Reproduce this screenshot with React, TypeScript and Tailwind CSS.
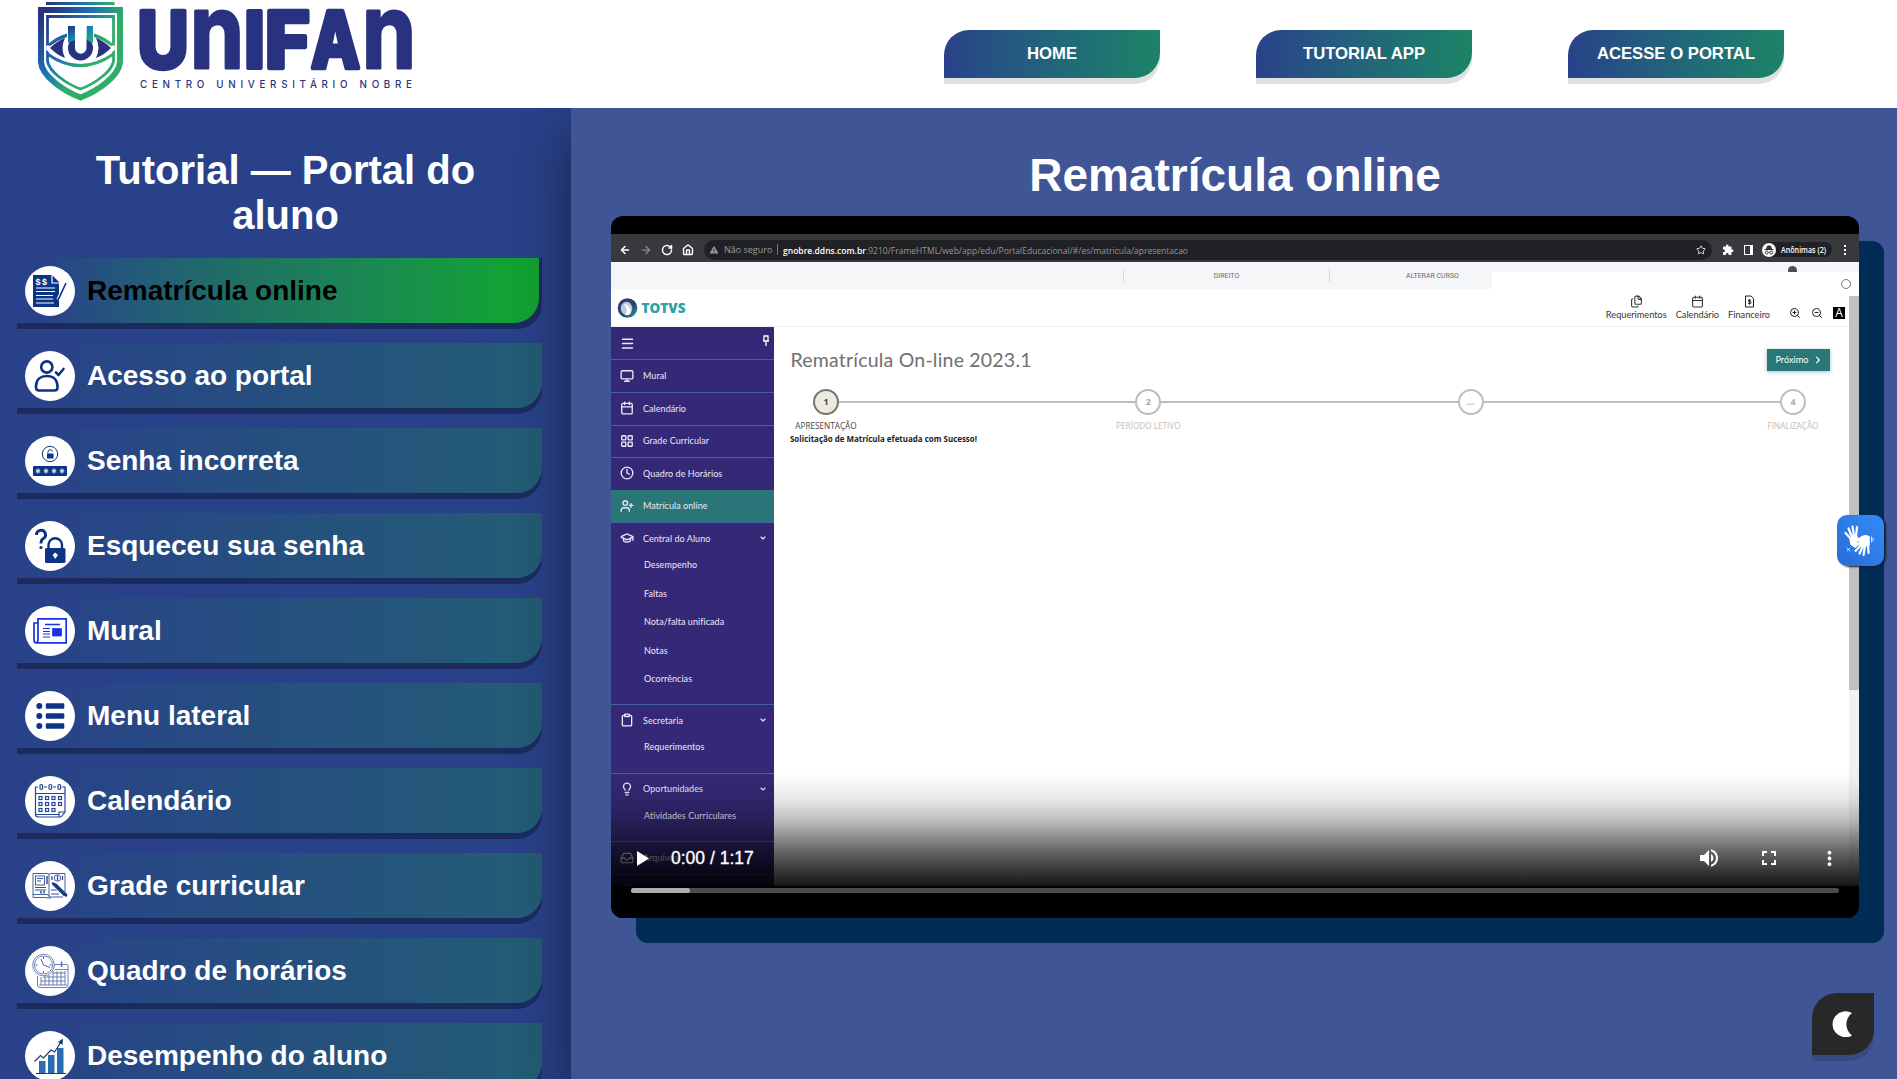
import React from "react";
import {
  ArrowLeft, ArrowRight, Calendar, ChevronDown, Clock, ClipboardList, Clipboard, Files, GraduationCap,
  Inbox, LayoutGrid, Lightbulb, Menu, Monitor, RotateCw, Home, Star, UserPlus, ZoomIn, ZoomOut,
} from "lucide-react";
import { FaChevronRight, FaExclamationTriangle } from "react-icons/fa";
import { MdVolumeUp, MdFullscreen, MdMoreVert, MdExtension } from "react-icons/md";

const NAVY = "#0b3484";

function Logo() {
  return (
    <svg width="440" height="108" viewBox="0 0 440 108" className="shrink-0" role="img" aria-label="UNIFAN Centro Universitário Nobre">
      <defs>
        <linearGradient id="shield" gradientUnits="userSpaceOnUse" x1="42" y1="18" x2="112" y2="70">
          <stop offset="0" stopColor="#29327f" />
          <stop offset="0.4" stopColor="#1a70b4" />
          <stop offset="0.72" stopColor="#2fae69" />
          <stop offset="1" stopColor="#2fae69" />
        </linearGradient>
        <linearGradient id="arms" x1="0" y1="0" x2="1" y2="1">
          <stop offset="0" stopColor="#29327f" />
          <stop offset="0.5" stopColor="#1787b5" />
          <stop offset="1" stopColor="#2fae69" />
        </linearGradient>
        <linearGradient id="bar" x1="0" y1="0" x2="1" y2="0">
          <stop offset="0" stopColor="#29327f" />
          <stop offset="0.5" stopColor="#1a70b4" />
          <stop offset="1" stopColor="#2fae69" />
        </linearGradient>
      </defs>
      <rect x="46" y="2" width="68.500" height="3" fill="url(#bar)" />
      <path d="M41 10H120V62C119 76 98 91 80.500 97.500C63 91 42 76 41 62Z" fill="none" stroke="url(#shield)" strokeWidth="6" />
      <path d="M47.500 16.500H113.500V61C112 72 94 84 80.500 89C67 84 49 72 47.500 61Z" fill="none" stroke="url(#shield)" strokeWidth="2.800" />
      <path d="M44 48Q80 16 117 48Q80 80 44 48" fill="white" />
      <path d="M47 45Q57 36 67 33.500V37Q58 40 50 46ZM94 33.500Q104 36 114 45L111 46Q103 40 94 37Z" fill="url(#shield)" />
      <path d="M47 52Q80 76 114 52V55.500Q80 79 47 55.500Z" fill="url(#shield)" />
      <path d="M50 48Q57 41 65 38Q60 48 65 58Q57 55 50 48ZM111 48Q104 41 96 38Q101 48 96 58Q104 55 111 48Z" fill="#29327f" />
      <circle cx="80.500" cy="48" r="12.500" fill="#29327f" />
      <path d="M68 26H75V40L68 43ZM86.500 26H93V43L86.500 40Z" fill="url(#arms)" />
      <path d="M75 26H86.500V48A5.700 5.700 0 0 1 75 48Z" fill="white" />
      <text y="68" fill="#29327f" stroke="#29327f" strokeLinejoin="round" fontFamily="Inter" fontWeight="800" fontSize="78">
        <tspan x="137.500" textLength="51" lengthAdjust="spacingAndGlyphs" strokeWidth="4.500">U</tspan>
        <tspan x="190" fontSize="104" fontWeight="700" strokeWidth="3" textLength="54" lengthAdjust="spacingAndGlyphs" style={{ textTransform: "lowercase" }}>N</tspan>
        <tspan x="244" textLength="21" lengthAdjust="spacingAndGlyphs" strokeWidth="4">I</tspan>
        <tspan x="265" textLength="45" lengthAdjust="spacingAndGlyphs" strokeWidth="4.500">F</tspan>
        <tspan x="311" textLength="49" lengthAdjust="spacingAndGlyphs" strokeWidth="4.500">A</tspan>
        <tspan x="362" fontSize="104" fontWeight="700" strokeWidth="3" textLength="54" lengthAdjust="spacingAndGlyphs" style={{ textTransform: "lowercase" }}>N</tspan>
      </text>
      <text x="140" y="87.800" textLength="272" fill="#29327f" fontFamily="Inter" fontWeight="500" fontSize="9.800">CENTRO UNIVERSITÁRIO NOBRE</text>
    </svg>
  );
}

const icons: Record<string, React.ReactNode> = {
  enroll: (
    <>
      <path d="M8 9H27L34 16V41H8Z" fill={NAVY} />
      <path d="M27 9V17H34" fill="none" stroke="white" strokeWidth="1.200" />
      <path d="M11 22H30M11 25.500H30M11 29.500H28M11 33H28M11 37H29" stroke="white" strokeWidth="1.200" />
      <text x="10.500" y="18.500" fontSize="9" fontWeight="700" fontFamily="Liberation Sans" letterSpacing="1.500" fill="white">$$</text>
      <path d="M40 18L33 34" stroke="white" strokeWidth="3.400" />
      <path d="M41 17L34 32L32 35" stroke={NAVY} strokeWidth="1.600" fill="none" />
    </>
  ),
  person: (
    <g fill="none" stroke={NAVY} strokeWidth="2.600" strokeLinecap="round" strokeLinejoin="round">
      <circle cx="21.800" cy="16" r="5.600" />
      <path d="M11 35.500C11 28 16 25 21.800 25S32.500 28 32.500 35.500V36.500Q32.500 39.500 29.500 39.500H14Q11 39.500 11 36.500Z" />
      <path d="M31 21.500L33.500 24L38.500 18" />
    </g>
  ),
  wrong: (
    <>
      <circle cx="25" cy="18" r="7.700" fill="none" stroke={NAVY} strokeWidth="1" />
      <rect x="22" y="17.500" width="6.500" height="5" fill={NAVY} />
      <path d="M23 17V15.500A2.300 2.300 0 0 1 27.500 15.500" fill="none" stroke={NAVY} strokeWidth="1" />
      <rect x="8" y="30" width="34" height="10" rx="1" fill={NAVY} />
      <path
        d="M13 32.500V37.500M10.800 33.700L15.200 36.300M15.200 33.700L10.800 36.300M21 32.500V37.500M18.800 33.700L23.200 36.300M23.200 33.700L18.800 36.300M29 32.500V37.500M26.800 33.700L31.200 36.300M31.200 33.700L26.800 36.300M37 32.500V37.500M34.800 33.700L39.200 36.300M39.200 33.700L34.800 36.300"
        stroke="#cfd9ee"
        strokeWidth="1.200"
      />
    </>
  ),
  forgot: (
    <>
      <path d="M11.500 14A4.500 4.500 0 1 1 18 17.800Q16 19 16 22.500" fill="none" stroke={NAVY} strokeWidth="2.900" />
      <circle cx="16" cy="26.500" r="1.600" fill={NAVY} />
      <rect x="20" y="27" width="20.500" height="15" rx="1.500" fill={NAVY} />
      <path d="M23.500 28V24A6.700 6.700 0 0 1 37 24V28" fill="none" stroke={NAVY} strokeWidth="2.400" />
      <path d="M30.200 31.500L33 34L30.200 38L27.600 34Z" fill="white" />
    </>
  ),
  news: (
    <g fill="none" stroke="#1732e6" strokeWidth="1.700">
      <path d="M13 12.800H41.200V36.800H11Q13 36.500 13 34Z" />
      <path d="M13 17H9V34Q9 36.800 11.500 36.800" />
      <path d="M20 18.500H35" />
      <path d="M18 22.500H25M18 25.500H25M18 28H25M18 31H25" strokeWidth="1" />
      <rect x="28" y="23" width="8" height="6.500" fill="#1732e6" />
    </g>
  ),
  list: (
    <g fill={NAVY}>
      {[15, 25, 35].map((y) => (
        <g key={y}>
          <circle cx="14.300" cy={y} r="3" />
          <rect x="20.800" y={y - 2.800} width="18.500" height="5.600" rx="1.300" />
        </g>
      ))}
    </g>
  ),
  calendar: (
    <g fill="none" stroke="#234490" strokeWidth="1.200">
      <path d="M13 11H10.500V38Q10.500 41 13 41H36L40 36V11H37M19 11H22M28 11H31M10.500 17.500H40M10.500 38.500H34M34 41V36H40" />
      {[15.500, 24.500, 33.500].map((x) => <rect key={x} x={x - 0.500} y="8.500" width="2.600" height="5" rx="1.200" />)}
      {[21, 27, 33].map((y) => [14, 20.500, 27, 33.500].map((x) => (x === 33.500 && y === 33 ? null : <rect key={x + "-" + y} x={x} y={y - 0.500} width="3" height="3" />)))}
    </g>
  ),
  book: (
    <g fill="none" stroke="#314f96" strokeWidth="0.900">
      <path d="M8 12.500H22Q24 12.500 24 14Q24 12.500 26 12.500H40V34M24 14V35M8 12.500V36.500H22M8 33.500H22Q24 33.500 24 36H38M26 37H22" />
      <rect x="10.500" y="15" width="9" height="9" />
      <path d="M12 17.500H18M12 20H16M10 26.500H21M10 29H21M26 29H34M26 33H34" strokeWidth="1.100" />
      <circle cx="32.500" cy="17" r="3.200" />
      <path d="M32.500 14.500V19.500M27 15V19M37.500 15V19" strokeWidth="1.300" />
      <path d="M27 22L40 34" stroke="white" strokeWidth="4" />
      <path d="M27 22L31 23.500L42 34.500M28 23L39 34L42 35" stroke="#173c88" strokeWidth="2" />
      <path d="M16 30V32.500M19 30V32.500M22 15V23" strokeWidth="1.500" />
    </g>
  ),
  schedule: (
    <g fill="none" stroke="#5a75b0" strokeWidth="0.900">
      <path d="M29 18.500H41.500Q43 18.500 43 20V39Q43 41.500 41 41.500H15Q12.500 41.500 12.500 39V30M30 23.500H43M14 39H42" />
      <path d="M28 27H40M18 31H40M16 35H40M20 31V39M24 29V39M28 25V39M32 25V39M36 25V39M16 31V39M40 25V39" />
      <path d="M36.500 15.500V21" strokeWidth="1.600" />
      <circle cx="18.500" cy="19" r="10.800" fill="white" />
      <circle cx="18.500" cy="19" r="9" />
      <path d="M16 13L18.500 19L25 21.500M18.500 11V13M18.500 25V27M10.500 19H12.500M24.500 19H26.500" stroke="#35549a" />
    </g>
  ),
  chart: (
    <>
      <g fill="#2a6db5">
        <rect x="14" y="30" width="6.500" height="12" />
        <rect x="23" y="24" width="6.500" height="18" />
        <rect x="32" y="17" width="6.500" height="25" />
      </g>
      <path d="M11 42.500H41" stroke="#153a80" strokeWidth="1" />
      <path d="M9.500 30.500L15.500 24.500L18.500 27L26 19L29.500 21L37 9.500" fill="none" stroke="#153a80" strokeWidth="1.200" />
      <path d="M38 7.500L33 11L37.500 14Z" fill="#153a80" />
    </>
  ),
};

const lessons = [
  { icon: "enroll", label: "Rematrícula online", active: true },
  { icon: "person", label: "Acesso ao portal" },
  { icon: "wrong", label: "Senha incorreta" },
  { icon: "forgot", label: "Esqueceu sua senha" },
  { icon: "news", label: "Mural" },
  { icon: "list", label: "Menu lateral" },
  { icon: "calendar", label: "Calendário" },
  { icon: "book", label: "Grade curricular" },
  { icon: "schedule", label: "Quadro de horários" },
  { icon: "chart", label: "Desempenho do aluno" },
];

function LessonItem({ icon, label, active }: { icon: string; label: string; active?: boolean }) {
  return (
    <li
      className={
        "flex h-[65px] w-[525px] shrink-0 items-center rounded-br-[25px] shadow-[0_6px_0_#1c2b5e] " +
        (active
          ? "bg-[linear-gradient(to_right,#294189_50%,#1c2b5e_50%)] pr-[3px] text-black"
          : "rounded-tl-[25px] bg-linear-to-r from-[#294189] to-[#235c74] text-white")
      }
    >
      <div
        className={
          "flex h-full w-full items-center gap-3 rounded-tl-[25px] rounded-br-[25px] pl-2 " +
          (active ? "bg-linear-to-r from-[#294189] from-5% via-[#1f7361] via-45% to-[#12a233] to-94%" : "")
        }
      >
        <span className="size-[50px] shrink-0 overflow-hidden rounded-full bg-white">
          <svg width="50" height="50" viewBox="0 0 50 50">{icons[icon]}</svg>
        </span>
        <span className="text-[28px] leading-8 font-bold">{label}</span>
      </div>
    </li>
  );
}

function Sidebar() {
  return (
    <aside className="flex w-[571px] shrink-0 flex-col bg-[#294189]">
      <h2 className="mt-[40px] px-10 text-center text-[40px] leading-[45px] font-bold text-white">Tutorial — Portal do aluno</h2>
      <ul className="mt-[20px] ml-[17px] flex flex-col gap-5">
        {lessons.map((l) => <LessonItem key={l.label} {...l} />)}
      </ul>
    </aside>
  );
}

const ic = { size: 14, strokeWidth: 2.300 };

function PortalRow({ icon, label, open, active }: { icon: React.ReactNode; label: string; open?: boolean; active?: boolean }) {
  return (
    <div className={"flex h-[32.500px] items-center pr-[7px] pl-[9px] " + (active ? "bg-[#2a7578]" : "")}>
      <span className="w-[23px] shrink-0">{icon}</span>
      <span className="flex-1">{label}</span>
      {open && <ChevronDown size={8} strokeWidth={3.500} />}
    </div>
  );
}

function PortalGroup({ icon, label, items, pad }: { icon: React.ReactNode; label: string; items: string[]; pad: string }) {
  return (
    <div className={"border-b border-[#41639f] " + pad}>
      <div className="-mt-px"><PortalRow icon={icon} label={label} open /></div>
      <div className="-mt-[4px] pl-[33px]">
        {items.map((t) => <div key={t} className="flex h-[28.500px] items-center">{t}</div>)}
      </div>
    </div>
  );
}

function PortalMenu() {
  const line = "border-b border-[#41639f]";
  return (
    <div className="h-full w-[163px] shrink-0 overflow-hidden bg-[#352876] font-['Lato'] text-[9px] tracking-[0.06px] text-[#ece9f6]">
      <div className={"flex h-[32.500px] items-center justify-between pt-px pr-[4px] pl-[9px] " + line}>
        <Menu size={15} strokeWidth={2.400} />
        <svg width="8" height="12" viewBox="0 0 8 12" className="-mt-1"><path d="M2 1H6V6H7H1H2ZM4 6V11" fill="none" stroke="white" strokeWidth="1.300" /></svg>
      </div>
      <div className={line}><PortalRow icon={<Monitor {...ic} />} label="Mural" /></div>
      <div className={"-mt-px " + line}><PortalRow icon={<Calendar {...ic} />} label="Calendário" /></div>
      <div className={"-mt-px " + line}><PortalRow icon={<LayoutGrid {...ic} />} label="Grade Curricular" /></div>
      <div className={"-mt-px " + line}><PortalRow icon={<Clock {...ic} />} label="Quadro de Horários" /></div>
      <div className={"-mt-px " + line}><PortalRow icon={<UserPlus {...ic} />} label="Matrícula online" active /></div>
      <PortalGroup icon={<GraduationCap {...ic} />} label="Central do Aluno" items={["Desempenho", "Faltas", "Nota/falta unificada", "Notas", "Ocorrências"]} pad="pb-[11px]" />
      <PortalGroup icon={<Clipboard {...ic} />} label="Secretaria" items={["Requerimentos"]} pad="pb-[11.500px]" />
      <PortalGroup icon={<Lightbulb {...ic} />} label="Oportunidades" items={["Atividades Curriculares"]} pad="pb-[11px]" />
      <div className={line}><PortalRow icon={<Inbox {...ic} />} label="Arquivos" /></div>
      <PortalRow icon={<ClipboardList {...ic} />} label="" />
    </div>
  );
}

function BrowserBar() {
  return (
    <div className="flex h-7 shrink-0 items-center bg-[#38393c] text-[9px] text-white">
      <div className="flex w-[93px] items-center gap-[9px] pt-1 pl-[8px]">
        <ArrowLeft size={12} strokeWidth={3} />
        <ArrowRight size={12} strokeWidth={2.500} className="text-[#8a8b8e]" />
        <RotateCw size={12} strokeWidth={3} />
        <Home size={12} strokeWidth={2.800} />
      </div>
      <div className="mt-[3px] flex h-5 w-[1008px] items-center rounded-full bg-[#202124] pr-[6px] pl-[6px] font-['Open_Sans'] text-[#9a9b9e]">
        <FaExclamationTriangle size={8} className="mr-[6px]" />
        <span className="w-[47px] whitespace-nowrap">Não seguro</span>
        <span className="mr-[5px] ml-[6px] h-[11px] w-px bg-[#77787a]" />
        <svg width="408" height="16" className="shrink-0" fontFamily="Open Sans" fontSize="9">
          <text x="0" y="11.500" textLength="405" lengthAdjust="spacingAndGlyphs" fill="#96979a">
            <tspan fill="white" fontWeight="600">gnobre.ddns.com.br</tspan>:9210/FrameHTML/web/app/edu/PortalEducacional/#/es/matricula/apresentacao
          </text>
        </svg>
        <Star size={10} className="ml-auto text-white" />
      </div>
      <div className="flex flex-1 items-center pt-[3px] pl-[10px]">
        <MdExtension size={12} />
        <span className="ml-[10px] h-[10px] w-[9px] border-[1.500px] border-r-[3px] border-white" />
        <span className="ml-[9px] flex h-[15px] w-[70px] items-center gap-1 rounded-full bg-[#202124] whitespace-nowrap">
          <svg width="14" height="14" viewBox="0 0 14 14" className="shrink-0">
            <circle cx="7" cy="7" r="7" fill="white" />
            <path d="M2.500 6.500H11.500M4.500 6L5.500 3H8.500L9.500 6Z" fill="#333" stroke="#333" />
            <circle cx="4.800" cy="9.500" r="1.500" fill="none" stroke="#333" /><circle cx="9.200" cy="9.500" r="1.500" fill="none" stroke="#333" />
          </svg>
          <svg width="48" height="12" fontFamily="Open Sans" fontSize="8.500"><text x="1" y="9" textLength="45" lengthAdjust="spacingAndGlyphs" fill="white" fontWeight="600">Anônimas (2)</text></svg>
        </span>
        <span className="ml-[12px] flex flex-col gap-[2px]">
          <i className="size-[2px] bg-white" /><i className="size-[2px] bg-white" /><i className="size-[2px] bg-white" />
        </span>
      </div>
    </div>
  );
}

function Step({ n, label, active }: { n: string; label: string; active?: boolean }) {
  return (
    <div className="flex w-[26px] shrink-0 flex-col items-center">
      <span className={"flex size-[26px] shrink-0 items-center justify-center rounded-full text-[9px] " + (active ? "border-2 border-[#77756f] bg-[#ece9e0] font-bold text-[#444]" : "border-2 border-[#bdbdbd] bg-white font-bold text-[#aaa]")}>{n}</span>
      <span className={"mt-[5.500px] text-[8.200px] leading-[12px] whitespace-nowrap " + (active ? "text-[#444]" : "text-[#bdbdbd]")}>{label}</span>
    </div>
  );
}

function PortalScreen() {
  return (
    <div className="flex h-[652px] flex-col overflow-hidden bg-white">
      <BrowserBar />
      <div className="flex h-[27px] shrink-0 items-start bg-white font-['Roboto'] text-[7px] text-[#6b6b6b]">
        <div className="flex h-[27px] w-[881px] items-center bg-[#f5f6f7]">
          <span className="ml-[512px] h-[13px] w-px bg-[#d5d7d9]" />
          <span className="w-[205px] pt-[2px] text-center">DIREITO</span>
          <span className="h-[13px] w-px bg-[#d5d7d9]" />
          <span className="flex-1 pt-[2px] pl-[43px] text-center">ALTERAR CURSO</span>
        </div>
        <div className="flex h-[10px] flex-1 items-end justify-end bg-[#f5f6f7] pr-[62px]">
          <span className="h-[6px] w-[9px] rounded-t-full bg-[#4b4f54]" />
        </div>
      </div>
      <div className="flex h-[38px] shrink-0 items-center border-b border-[#efefef] pl-[6px]">
        <svg width="72" height="24" viewBox="0 0 72 24">
          <defs><linearGradient id="orb" x1="0" y1="0" x2="1" y2="1"><stop offset="0" stopColor="#3a3a5c" /><stop offset="0.6" stopColor="#22486f" /><stop offset="1" stopColor="#2bb0b0" /></linearGradient></defs>
          <circle cx="10.500" cy="12" r="9.800" fill="url(#orb)" />
          <ellipse cx="9.500" cy="12.300" rx="5.800" ry="6.600" fill="#b8cde0" />
          <path d="M7 8Q13 8 14 17Q12 20 8 19Q12 14 7 8" fill="white" />
          <text x="24.500" y="17" fontFamily="Open Sans" fontWeight="800" fontSize="14.500" textLength="44" lengthAdjust="spacingAndGlyphs" fill="#2ba3a7">TOTVS</text>
        </svg>
        <div className="ml-auto flex items-start gap-[9px] pr-[19px] font-['Lato'] text-[9.200px] leading-[11px] text-[#333]">
          <span className="flex flex-col items-center gap-px"><Files size={13} />Requerimentos</span>
          <span className="flex flex-col items-center gap-px"><Calendar size={13} />Calendário</span>
          <span className="flex flex-col items-center gap-px">
            <svg width="13" height="13" viewBox="0 0 13 13" fill="none" stroke="#222">
              <path d="M2.500 1H8L10.500 3.500V12H2.500Z" />
              <path d="M8 5H5.500V6.700H7.800V8.500H5M6.600 4V9.700" strokeWidth="0.900" />
            </svg>
            Financeiro
          </span>
        </div>
        <div className="flex items-center gap-[10px] pt-[10px] pr-[14px] text-[#222]">
          <ZoomIn size={12} /><ZoomOut size={12} />
          <span className="flex size-[12px] items-center justify-center bg-black font-['Open_Sans'] text-[12px] leading-[12px] text-white">A</span>
        </div>
      </div>
      <div className="flex min-h-0 flex-1">
        <PortalMenu />
        <div className="flex flex-1 flex-col pl-[16px] font-['Open_Sans']">
          <div className="mt-[21.500px] flex h-[22px] items-center justify-between pr-[19px]">
            <svg width="250" height="24" fontFamily="Lato"><text x="0.500" y="18.500" fontSize="19.500" textLength="241" fill="#707070">Rematrícula On-line 2023.1</text></svg>
            <span className="flex h-[22px] w-[63px] items-center justify-center gap-[5px] bg-[#2a7778] font-['Lato'] text-[9.200px] text-white shadow-[0_1px_4px_rgba(42,119,120,.45)]">Próximo <FaChevronRight size={8} /></span>
          </div>
          <div className="mt-[18px] mr-[43px] ml-[23px] flex h-[43.500px] items-start">
            <Step n="1" label="APRESENTAÇÃO" active />
            <span className="mt-[12px] h-[2px] flex-1 bg-[#bdbdbd]" />
            <Step n="2" label="PERÍODO LETIVO" />
            <span className="mt-[12px] h-[2px] flex-1 bg-[#bdbdbd]" />
            <Step n="..." label="" />
            <span className="mt-[12px] h-[2px] flex-1 bg-[#bdbdbd]" />
            <Step n="4" label="FINALIZAÇÃO" />
          </div>
          <svg width="200" height="14"><text x="0" y="9.500" fontFamily="Open Sans" fontWeight="700" fontSize="8.500" textLength="187" lengthAdjust="spacingAndGlyphs" fill="#222">Solicitação de Matrícula efetuada com Sucesso!</text></svg>
        </div>
        <div className="-mt-[31px] w-[10px] shrink-0 bg-[#f1f1f1]"><div className="h-[394px] bg-[#c1c1c1]" /></div>
      </div>
    </div>
  );
}

function VideoPlayer() {
  return (
    <div className="relative h-[702px] w-[1248px] shrink-0 overflow-hidden rounded-xl bg-black pt-[18px]">
      <PortalScreen />
      <span className="absolute top-[63px] right-[8px] size-[10px] rounded-full border border-[#777]" />
      <div className="absolute inset-x-0 bottom-0 flex h-[152px] flex-col bg-[linear-gradient(to_bottom,rgba(0,0,0,0)_0px,rgba(0,0,0,.02)_15px,rgba(0,0,0,.10)_34px,rgba(0,0,0,.24)_53px,rgba(0,0,0,.43)_70px,rgba(0,0,0,.60)_85px,rgba(0,0,0,.78)_104px,rgba(0,0,0,.90)_119px,black_123px)] px-5 text-white">
        <div className="mt-[72px] flex h-10 items-center">
          <svg width="12" height="15" viewBox="0 0 12 15" className="ml-[6px]"><path d="M0 0L12 7.500L0 15Z" fill="white" /></svg>
          <span className="ml-[22px] text-[17.500px] [-webkit-text-stroke:0.3px_white]">0:00 / 1:17</span>
          <span className="mr-[-2px] ml-auto flex items-center"><MdVolumeUp size={24} className="mr-[36px]" /><MdFullscreen size={24} className="mr-[37px]" /><MdMoreVert size={23} /></span>
        </div>
        <div className="mt-[10px] h-[5px] rounded-full bg-[#4c4c4c]"><div className="h-full w-[59px] rounded-full bg-[#adadad]" /></div>
      </div>
    </div>
  );
}

function LibrasButton() {
  return (
    <div className="absolute top-[515px] right-[13px] flex h-[51px] w-[47px] items-center justify-center rounded-[10px] bg-linear-to-tr from-[#2a6bd6] to-[#338cf8] shadow-[2px_1px_2px_#14202e]">
      <svg width="31" height="33" viewBox="0 0 31 33" fill="none" stroke="white" strokeWidth="2.200" strokeLinecap="round" className="-ml-1">
        <path d="M8 15L2.500 9M9 13L5.500 4.500M11 12L9.500 2.500M13 12L14 3" />
        <path d="M7 14L13 11L15 15L11 17L16 20L12 23L8 20Z" fill="white" strokeWidth="1.500" />
        <path d="M18 21L12.500 27M20 22L16.500 29.500M22 22L20.500 31M25 20L25.500 29" />
        <path d="M17 14Q21 10 26 13L26 21L19 23L16 19L18 17L13 17Z" fill="white" strokeWidth="1.500" />
        <path d="M28.500 13V18M30 14V17M4 24L7 27M7 24L4 27" strokeWidth="0.800" />
      </svg>
    </div>
  );
}

export default function App() {
  return (
    <div className="relative flex h-[1079px] w-[1897px] flex-col overflow-hidden bg-[#405595] font-['Liberation_Sans',sans-serif]">
      <header className="relative z-10 flex h-[108px] shrink-0 items-start bg-white pr-[113px]">
        <Logo />
        <nav className="mt-[30px] ml-auto flex gap-24">
          {["HOME", "TUTORIAL APP", "ACESSE O PORTAL"].map((t) => (
            <a key={t} className="flex h-12 w-[216px] items-center justify-center rounded-tl-[25px] rounded-br-[25px] bg-linear-to-r from-[#294189] to-[#1c8465] text-[16.700px] font-bold text-white shadow-[0_6px_0_#e0e0e0]">{t}</a>
          ))}
        </nav>
      </header>
      <div className="flex min-h-0 flex-1">
        <Sidebar />
        <main className="flex flex-1 flex-col items-start bg-[#405595] pl-10 shadow-[0_25px_50px_rgba(0,0,0,.48)]">
          <h1 className="mt-[41px] w-[1248px] text-center text-[46px] leading-[52px] font-bold text-white">Rematrícula online</h1>
          <div className="mt-[15px] rounded-xl shadow-[25px_25px_0_#002c56]"><VideoPlayer /></div>
        </main>
      </div>
      <LibrasButton />
      <button className="absolute right-[23px] bottom-[24px] flex size-[62px] items-center justify-center rounded-tl-[25px] rounded-br-[25px] bg-[#282828] shadow-[0_6px_0_rgba(0,0,0,.12)]">
        <svg width="20" height="26" viewBox="0 0 20 26" className="mr-[2px]"><path d="M20 2A14 14 0 0 0 20 24.500A13 13 0 1 1 20 2Z" fill="white" /></svg>
      </button>
    </div>
  );
}
